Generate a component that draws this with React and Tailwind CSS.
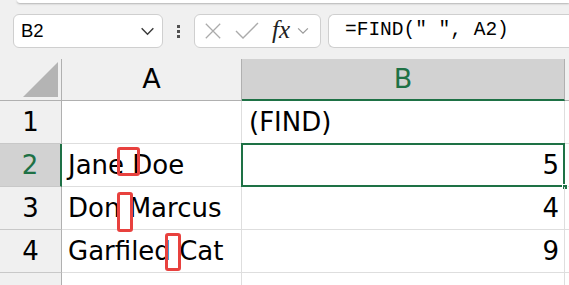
import React from "react";

const GREEN = "#1e7145";

function Chevron({ className }) {
  return (
    <svg viewBox="0 0 16 10" className={className} fill="none">
      <path d="M1.5 1.5 L8 8 L14.5 1.5" stroke="currentColor" strokeWidth="1.6" />
    </svg>
  );
}

function Toolbar() {
  return (
    <div className="flex items-center h-[34px] mt-[11px] pl-[13px]">
      <div className="flex items-center justify-between w-[150px] h-[34px] bg-white border border-[#cfcfcf] rounded-[6px] pl-[7px] pr-[7px]">
        <span className="font-['Liberation_Sans'] text-[18.5px] text-black">B2</span>
        <Chevron className="w-[15px] h-[9px] text-[#3a3a3a]" />
      </div>
      <div className="flex flex-col gap-[2px] ml-[14px] mr-[14px]">
        <span className="w-[3px] h-[3px] bg-[#505050]" />
        <span className="w-[3px] h-[3px] bg-[#505050]" />
        <span className="w-[3px] h-[3px] bg-[#505050]" />
      </div>
      <div className="flex items-center w-[127px] h-[34px] bg-white border border-[#cfcfcf] rounded-[6px] pl-[9px]">
        <svg viewBox="0 0 20 20" className="w-[18px] h-[18px]" fill="none">
          <path d="M2 2 L18 18 M18 2 L2 18" stroke="#ababab" strokeWidth="1.4" />
        </svg>
        <svg viewBox="0 0 24 18" className="w-[24px] h-[18px] ml-[13px]" fill="none">
          <path d="M1 9 L8 16 L23 1" stroke="#ababab" strokeWidth="1.4" />
        </svg>
        <span className="ml-[13px] font-['Liberation_Serif'] italic text-[25px] leading-none text-[#222] -mt-[3px]">
          fx
        </span>
        <Chevron className="ml-[7px] w-[12px] h-[8px] text-[#9a9a9a]" />
      </div>
      <div className="flex items-center flex-1 h-[34px] ml-[7px] bg-white border border-r-0 border-[#cfcfcf] rounded-l-[6px] pl-[16px]">
        <span className="font-['Liberation_Mono'] text-[19.5px] text-black whitespace-pre">
          =FIND(" ", A2)
        </span>
      </div>
    </div>
  );
}

function RedBox({ className }) {
  return (
    <span
      className={
        "absolute border-[3px] border-[#e8413e] rounded-[3px] " + className
      }
    />
  );
}

const rows = [
  { n: "1", a: "", b: "(FIND)", bAlign: "left" },
  { n: "2", a: "Jane Doe", b: "5", mark: "left-[55px] top-[3px] w-[23px] h-[29px]" },
  { n: "3", a: "Don Marcus", b: "4", mark: "left-[55px] top-[5px] w-[16px] h-[40px]" },
  { n: "4", a: "Garfiled Cat", b: "9", mark: "left-[103px] top-[3px] w-[16px] h-[38px]" },
  { n: "", a: "", b: "" },
];

function Grid() {
  return (
    <div className="mt-[11px] font-['DejaVu_Sans'] text-[26px] text-black">
      <div className="flex h-[42px] text-[27px]">
        <div className="w-[62px] border-r border-b border-[#b0b0b0] flex items-end justify-end pr-[3px] pb-[3px]">
          <svg viewBox="0 0 35 35" className="w-[35px] h-[35px]">
            <path d="M0 35 L35 0 L35 35 Z" fill="#b4b4b4" />
          </svg>
        </div>
        <div className="w-[180px] border-r border-b border-[#b0b0b0] flex items-center justify-center">
          A
        </div>
        <div
          className="w-[323px] bg-[#d2d2d2] border-r border-[#b0b0b0] border-b-2 flex items-center justify-center"
          style={{ borderBottomColor: GREEN, color: GREEN }}
        >
          B
        </div>
        <div className="flex-1 border-b border-[#b0b0b0]" />
      </div>
      {rows.map((r, i) => {
        const selected = r.n === "2";
        return (
          <div key={i} className="flex h-[43px] bg-white">
            <div
              className={
                "w-[62px] flex items-center justify-center border-b border-[#c8c8c8] " +
                (selected ? "bg-[#d2d2d2] border-r-2" : "bg-[#f0f0f0] border-r border-r-[#b0b0b0]")
              }
              style={selected ? { borderRightColor: GREEN, color: GREEN } : undefined}
            >
              {r.n}
            </div>
            <div className="relative w-[180px] flex items-center pl-[6px] border-r border-b border-[#dedede] whitespace-pre">
              {r.a}
              {r.mark && <RedBox className={r.mark} />}
            </div>
            <div
              className={
                "relative w-[323px] flex items-center border-r border-b border-[#dedede] " +
                (r.bAlign === "left" ? "pl-[7px]" : "justify-end pr-[5px]")
              }
            >
              {r.b}
              {selected && (
                <>
                  <span
                    className="absolute -left-px -top-px -right-px -bottom-px border-2"
                    style={{ borderColor: GREEN }}
                  />
                  <span
                    className="absolute -right-[4px] -bottom-[4px] w-[6px] h-[6px] border border-white"
                    style={{ background: GREEN }}
                  />
                </>
              )}
            </div>
            <div className="flex-1 border-b border-[#dedede]" />
          </div>
        );
      })}
    </div>
  );
}

export default function App() {
  return (
    <div className="w-[569px] h-[285px] overflow-hidden bg-[#f0f0f0]">
      <div className="h-[3px] ml-[17px] bg-white rounded-bl-[6px] shadow-[0_1px_2px_rgba(0,0,0,0.25)]" />
      <Toolbar />
      <Grid />
    </div>
  );
}
